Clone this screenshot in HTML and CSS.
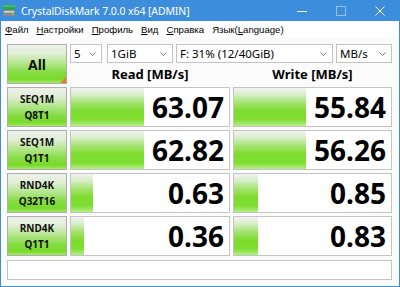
FILE: index.html
```html
<!DOCTYPE html>
<html>
<head>
<meta charset="utf-8">
<link rel="stylesheet" href="styles.css">
</head>
<body>
<div class="window">
  <div class="titlebar">
    <svg class="app-icon" width="12" height="11" viewBox="0 0 12 11">
      <rect x="0" y="0" width="12" height="2" fill="#3cc83c"/>
      <rect x="0" y="2.5" width="12" height="2" fill="#2fa82f"/>
      <rect x="0" y="5" width="12" height="6" rx="1" fill="#8a8a8a"/>
      <rect x="1" y="6" width="10" height="1.5" fill="#d8d8d8"/>
      <rect x="9" y="8.5" width="2" height="1.5" fill="#5fe05f"/>
    </svg>
    <span class="title">CrystalDiskMark 7.0.0 x64 [ADMIN]</span>
    <div class="controls">
      <span class="ctl"><svg width="10" height="10" viewBox="0 0 10 10"><line x1="0" y1="5.5" x2="10" y2="5.5" stroke="#fff" stroke-width="1"/></svg></span>
      <span class="ctl dim"><svg width="10" height="10" viewBox="0 0 10 10"><rect x="0.5" y="0.5" width="9" height="9" fill="none" stroke="#fff" stroke-width="1"/></svg></span>
      <span class="ctl"><svg width="10" height="10" viewBox="0 0 10 10"><path d="M0.5 0.5 L9.5 9.5 M9.5 0.5 L0.5 9.5" stroke="#fff" stroke-width="1"/></svg></span>
    </div>
  </div>
  <div class="menubar">
    <span class="mi"><u>Ф</u>айл</span>
    <span class="mi"><u>Н</u>астройки</span>
    <span class="mi"><u>П</u>рофиль</span>
    <span class="mi"><u>В</u>ид</span>
    <span class="mi"><u>С</u>правка</span>
    <span class="mi">Язык(<u>L</u>anguage)</span>
  </div>
  <div class="main">
    <div class="grid">
      <div class="btn all">All</div>
      <div class="top">
        <div class="selects">
          <div class="sel s-count"><span>5</span><svg class="chev" width="7" height="4" viewBox="0 0 7 4"><path d="M0.5 0.5 L3.5 3.5 L6.5 0.5" fill="none" stroke="#707070" stroke-width="1"/></svg></div>
          <div class="sel s-size"><span>1GiB</span><svg class="chev" width="7" height="4" viewBox="0 0 7 4"><path d="M0.5 0.5 L3.5 3.5 L6.5 0.5" fill="none" stroke="#707070" stroke-width="1"/></svg></div>
          <div class="sel s-drive"><span>F: 31% (12/40GiB)</span><svg class="chev" width="7" height="4" viewBox="0 0 7 4"><path d="M0.5 0.5 L3.5 3.5 L6.5 0.5" fill="none" stroke="#707070" stroke-width="1"/></svg></div>
          <div class="sel s-unit"><span>MB/s</span><svg class="chev" width="7" height="4" viewBox="0 0 7 4"><path d="M0.5 0.5 L3.5 3.5 L6.5 0.5" fill="none" stroke="#707070" stroke-width="1"/></svg></div>
        </div>
        <div class="heads">
          <div class="head">Read [MB/s]</div>
          <div class="head">Write [MB/s]</div>
        </div>
      </div>

      <div class="btn label"><span>SEQ1M</span><span>Q8T1</span></div>
      <div class="cell"><div class="bar" style="width:73px"></div><span class="num">63.07</span></div>
      <div class="cell"><div class="bar" style="width:72px"></div><span class="num">55.84</span></div>

      <div class="btn label"><span>SEQ1M</span><span>Q1T1</span></div>
      <div class="cell"><div class="bar" style="width:73px"></div><span class="num">62.82</span></div>
      <div class="cell"><div class="bar" style="width:72px"></div><span class="num">56.26</span></div>

      <div class="btn label"><span>RND4K</span><span>Q32T16</span></div>
      <div class="cell"><div class="bar" style="width:22px"></div><span class="num">0.63</span></div>
      <div class="cell"><div class="bar" style="width:24px"></div><span class="num">0.85</span></div>

      <div class="btn label"><span>RND4K</span><span>Q1T1</span></div>
      <div class="cell"><div class="bar" style="width:13px"></div><span class="num">0.36</span></div>
      <div class="cell"><div class="bar" style="width:24px"></div><span class="num">0.83</span></div>
    </div>
    <div class="status"></div>
  </div>
</div>
</body>
</html>
```

FILE: styles.css
```css
* { box-sizing: border-box; }
html, body { margin: 0; padding: 0; }
body {
  width: 400px;
  height: 287px;
  overflow: hidden;
  font-family: "Noto Sans", "Open Sans", sans-serif;
  background: #fbfbfb;
}
.window {
  width: 400px;
  height: 287px;
  border: 1px solid #3c8ddb;
  border-top: none;
  background: #fbfbfb;
  display: flex;
  flex-direction: column;
}
.titlebar {
  height: 21px;
  background: #3c8ddb;
  display: flex;
  align-items: center;
  color: #fff;
}
.app-icon { margin-left: 2px; margin-right: 6px; }
.title { font-size: 10.5px; letter-spacing: -0.1px; white-space: nowrap; }
.controls { margin-left: auto; display: flex; height: 100%; }
.ctl {
  width: 39px;
  height: 100%;
  display: flex;
  align-items: center;
  justify-content: center;
}
.ctl.dim svg { opacity: 0.45; }
.menubar {
  height: 17px;
  background: #fff;
  display: flex;
  align-items: center;
  gap: 8px;
  padding-left: 4px;
  font-family: "Liberation Sans", Arial, sans-serif;
  font-size: 9.6px;
  color: #000;
}
.mi { white-space: nowrap; }
.mi u { text-decoration-thickness: 1px; text-underline-offset: 1px; }
.main {
  padding: 6px 0 0 6px;
}
.grid {
  display: grid;
  grid-template-columns: 60px 160px 159px;
  grid-template-rows: 40px repeat(4, 40px);
  column-gap: 3px;
  row-gap: 3px;
}
.btn {
  border: 1px solid #adadad;
  background: linear-gradient(#eef1ec 0%, #e0eed6 22%, #b4e68c 48%, #86dc44 72%, #78da28 90%, #a4ea68 100%);
  color: #111;
  font-weight: 700;
  display: flex;
  flex-direction: column;
  align-items: center;
  justify-content: center;
}
.all {
  position: relative;
  font-size: 14px;
}
.all::after {
  content: "";
  position: absolute;
  right: 0;
  bottom: 0;
  width: 0;
  height: 0;
  border-left: 6px solid transparent;
  border-bottom: 6px solid #f0781e;
}
.label {
  font-size: 10px;
  line-height: 16px;
}
.top {
  grid-column: 2 / 4;
  display: flex;
  flex-direction: column;
}
.selects {
  display: flex;
  height: 19px;
  gap: 3px;
}
.sel {
  border: 1px solid #c4c4c4;
  background: #fff;
  display: flex;
  align-items: center;
  padding: 0 5px 0 3px;
  font-size: 11.5px;
  color: #000;
  white-space: nowrap;
}
.sel .chev { margin-left: auto; }
.s-count { width: 32px; margin-right: 2px; }
.s-size { width: 66px; }
.s-drive { width: 157px; }
.s-unit { width: 56px; }
.heads {
  flex: 1;
  display: grid;
  grid-template-columns: 160px 159px;
  column-gap: 3px;
  align-items: center;
}
.head {
  text-align: center;
  font-weight: 700;
  font-size: 13px;
  color: #000;
  padding-top: 1px;
}
.cell {
  border: 1px solid #c4c4c4;
  background: #fff;
  display: flex;
  align-items: stretch;
}
.bar {
  flex: none;
  background: linear-gradient(#f3f3f3 0%, #d6eec6 18%, #a2e26c 40%, #7cdc2c 62%, #80de34 84%, #b6ee88 100%);
}
.num {
  margin-left: auto;
  align-self: center;
  font-size: 28px;
  font-weight: 700;
  color: #000;
  padding-right: 5px;
  line-height: 1;
}
.status {
  margin-top: 4px;
  width: 385px;
  height: 20px;
  border: 1px solid #c4c4c4;
  background: #fff;
}
```
